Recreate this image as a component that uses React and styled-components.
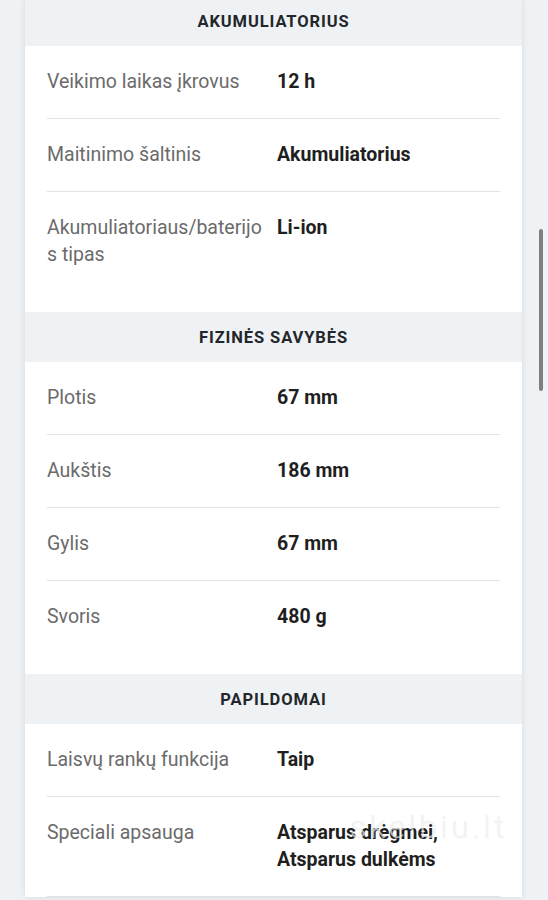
import React from 'react';
import styled, { createGlobalStyle } from 'styled-components';

const GlobalStyle = createGlobalStyle`
  html, body {
    margin: 0;
    padding: 0;
    background: #eef2f5;
    font-family: Roboto, "Noto Sans", "Liberation Sans", sans-serif;
    overflow: hidden;
  }
`;

const Page = styled.div`
  position: relative;
  width: 548px;
  height: 900px;
  overflow: hidden;
`;

const Card = styled.div`
  width: 497px;
  margin: -4px 0 0 25px;
  background: #ffffff;
  box-shadow: 0 0 6px rgba(0, 0, 0, 0.1);
`;

const SectionHeader = styled.div`
  height: 50px;
  background: #eff2f4;
  display: flex;
  align-items: center;
  justify-content: center;
  font-size: 16.5px;
  font-weight: 700;
  letter-spacing: 0.9px;
  color: #23262a;
  text-transform: uppercase;
`;

const SectionBody = styled.div`
  padding: 0 22px ${(p) => (p.$open ? '0' : '20px')};
`;

const Row = styled.div`
  display: grid;
  grid-template-columns: 218px 1fr;
  column-gap: 12px;
  padding: 22px 0 23px;
  border-bottom: 1px solid ${(p) => (p.$divider ? '#e2e2e2' : 'transparent')};
`;

const Label = styled.div`
  font-size: 19.5px;
  line-height: 27px;
  color: #6b6b6b;
  word-break: break-all;
`;

const Value = styled.div`
  font-size: 19.5px;
  line-height: 27px;
  font-weight: 700;
  color: #1f1f1f;
`;

const Scrollbar = styled.div`
  position: absolute;
  left: 539px;
  top: 229px;
  width: 4px;
  height: 162px;
  border-radius: 2px;
  background: #7d7f81;
`;

const Watermark = styled.div`
  position: absolute;
  left: 350px;
  top: 808px;
  font-size: 32px;
  font-weight: 300;
  letter-spacing: 3.5px;
  color: rgba(255, 255, 255, 0.6);
  text-shadow: 0 0 1px rgba(150, 150, 150, 0.3);
  pointer-events: none;
`;

const sections = [
  {
    title: 'Akumuliatorius',
    rows: [
      ['Veikimo laikas įkrovus', '12 h'],
      ['Maitinimo šaltinis', 'Akumuliatorius'],
      ['Akumuliatoriaus/baterijos tipas', 'Li-ion'],
    ],
  },
  {
    title: 'Fizinės savybės',
    rows: [
      ['Plotis', '67 mm'],
      ['Aukštis', '186 mm'],
      ['Gylis', '67 mm'],
      ['Svoris', '480 g'],
    ],
  },
  {
    title: 'Papildomai',
    open: true,
    rows: [
      ['Laisvų rankų funkcija', 'Taip'],
      ['Speciali apsauga', 'Atsparus drėgmei, Atsparus dulkėms'],
    ],
  },
];

export default function App() {
  return (
    <Page>
      <GlobalStyle />
      <Card>
        {sections.map((section) => (
          <div key={section.title}>
            <SectionHeader>{section.title}</SectionHeader>
            <SectionBody $open={section.open}>
              {section.rows.map(([label, value], i) => (
                <Row
                  key={label}
                  $divider={section.open || i < section.rows.length - 1}
                >
                  <Label>{label}</Label>
                  <Value>{value}</Value>
                </Row>
              ))}
            </SectionBody>
          </div>
        ))}
      </Card>
      <Watermark>skelbiu.lt</Watermark>
      <Scrollbar />
    </Page>
  );
}
